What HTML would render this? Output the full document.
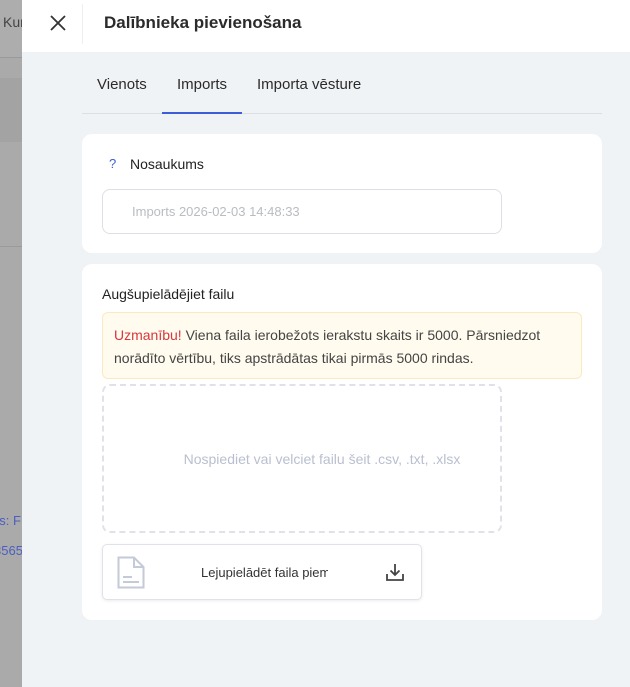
<!DOCTYPE html>
<html><head><meta charset="utf-8"><style>
*{box-sizing:border-box;margin:0;padding:0}
body{width:630px;height:687px;overflow:hidden;font-family:"Liberation Sans",sans-serif;background:#f0f3f5;position:relative}
.left{position:absolute;left:0;top:0;width:22px;height:687px;background:#aaaaaa;overflow:hidden}
.panel{position:absolute;left:22px;top:0;width:608px;height:687px;background:#f0f3f5}
.hdr{height:52px;background:#fff;position:relative}
.card{position:absolute;left:60px;width:520px;background:#fff;border-radius:10px}
</style></head><body>
<div class="left">
 <div style="position:absolute;top:0;height:58px;width:22px;background:#adadad;border-bottom:1px solid #9a9a9a"></div>
 <div style="position:absolute;top:14px;left:3px;font-size:14px;color:#444">Kur</div>
 <div style="position:absolute;top:78px;height:64px;width:22px;background:#a3a3a3"></div>
 <div style="position:absolute;top:246px;height:1px;width:22px;background:#9a9a9a"></div>
 <div style="position:absolute;top:513px;left:-8px;font-size:13px;color:#4a5fc0">es: F</div>
 <div style="position:absolute;top:543px;left:-6px;font-size:13px;color:#4a5fc0">3565</div>
</div>
<div class="panel">
 <div class="hdr">
  <svg style="position:absolute;left:28px;top:15px" width="16" height="16" viewBox="0 0 16 16"><path d="M1 1L15 15M15 1L1 15" stroke="#333" stroke-width="1.8"/></svg>
  <div style="position:absolute;left:60px;top:4px;width:1px;height:40px;background:#eee"></div>
  <div style="position:absolute;left:82px;top:13px;font-size:17px;color:#2b2b2b;font-weight:bold">Dalībnieka pievienošana</div>
 </div>
 <div style="position:absolute;left:60px;top:113px;width:520px;height:1px;background:#dcdfe3"></div>
 <div style="position:absolute;left:140px;top:112px;width:80px;height:2px;background:#3b5ed8"></div>
 <div style="position:absolute;left:75px;top:76px;font-size:15px;color:#2b2b2b">Vienots</div>
 <div style="position:absolute;left:155px;top:76px;font-size:15px;color:#2b2b2b">Imports</div>
 <div style="position:absolute;left:235px;top:76px;font-size:15px;color:#2b2b2b">Importa vēsture</div>

 <div class="card" style="top:134px;height:119px">
  <div style="position:absolute;left:27px;top:22px;font-size:13px;color:#3b5ed8">?</div>
  <div style="position:absolute;left:48px;top:22px;font-size:14px;color:#222">Nosaukums</div>
  <div style="position:absolute;left:20px;top:55px;width:400px;height:45px;border:1px solid #dcdfe6;border-radius:8px"></div>
  <div style="position:absolute;left:50px;top:70px;font-size:13px;color:#b9bcc2">Imports 2026-02-03 14:48:33</div>
 </div>

 <div class="card" style="top:264px;height:356px">
  <div style="position:absolute;left:20px;top:22px;font-size:14px;color:#222">Augšupielādējiet failu</div>
  <div style="position:absolute;left:20px;top:48px;width:480px;height:67px;background:#fffbee;border:1px solid #fbe9c0;border-radius:6px;padding:11px 11px;font-size:14px;line-height:23px;color:#444"><span style="color:#d9363e">Uzmanību!</span> Viena faila ierobežots ierakstu skaits ir 5000. Pārsniedzot norādīto vērtību, tiks apstrādātas tikai pirmās 5000 rindas.</div>
  <div style="position:absolute;left:20px;top:120px;width:400px;height:149px;border:2px dashed #e1e1ea;border-radius:8px"></div>
  <div style="position:absolute;left:20px;top:187px;width:440px;text-align:center;font-size:14px;color:#b9bfd0">Nospiediet vai velciet failu šeit .csv, .txt, .xlsx</div>
  <div style="position:absolute;left:20px;top:280px;width:320px;height:56px;border:1px solid #dfe2ea;border-radius:5px;box-shadow:0 1px 3px rgba(0,0,0,.08)">
   <svg style="position:absolute;left:14px;top:11px" width="28" height="33" viewBox="0 0 28 33"><path d="M1.5 1.5H17L26.5 11V31.5H1.5Z M17 1.5V11H26.5 M6 21H15 M6 26H22" fill="none" stroke="#c5cad8" stroke-width="2"/></svg>
   <div style="position:absolute;left:98px;top:20px;width:127px;overflow:hidden;white-space:nowrap;font-size:13px;color:#333">Lejupielādēt faila piemēru</div>
   <svg style="position:absolute;left:282px;top:17px" width="20" height="20" viewBox="0 0 20 20"><path d="M10 2V13M5.5 8.5L10 13L14.5 8.5M2 12V18H18V12" fill="none" stroke="#444" stroke-width="1.8"/></svg>
  </div>
 </div>
</div>
</body></html>
